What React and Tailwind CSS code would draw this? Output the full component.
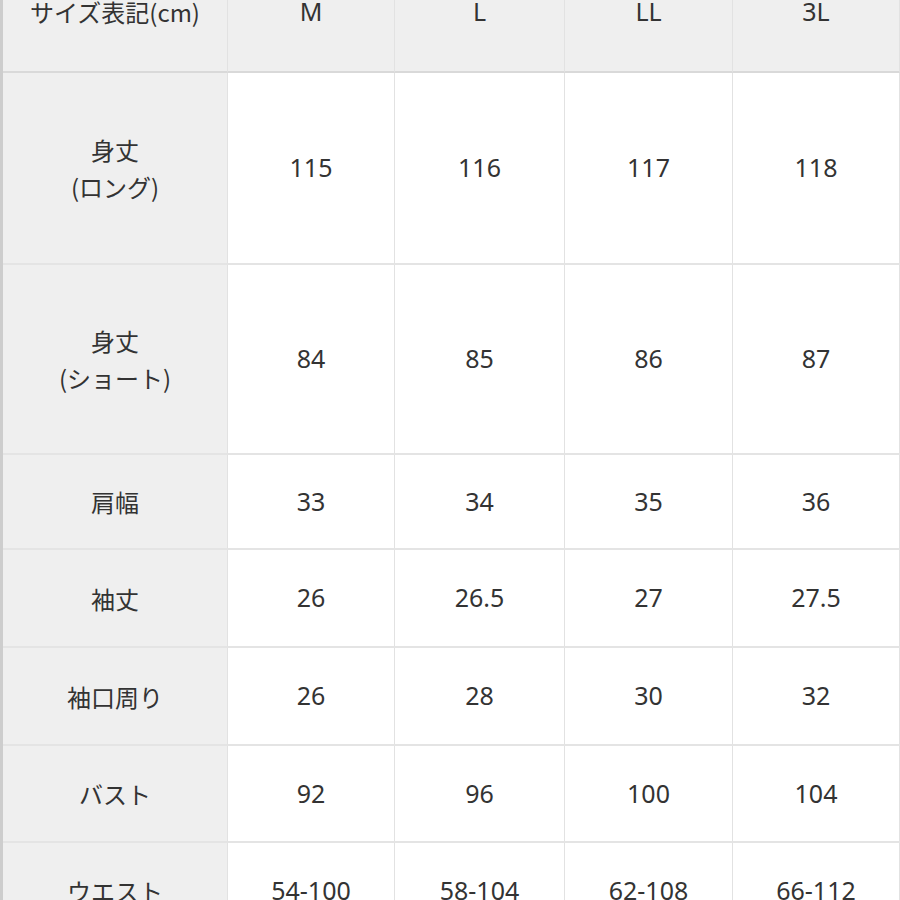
import React from "react";

const sizes = ["M", "L", "LL", "3L"];
const rows = [
  { label: ["身丈", "(ロング)"], values: ["115", "116", "117", "118"] },
  { label: ["身丈", "(ショート)"], values: ["84", "85", "86", "87"] },
  { label: ["肩幅"], values: ["33", "34", "35", "36"] },
  { label: ["袖丈"], values: ["26", "26.5", "27", "27.5"] },
  { label: ["袖口周り"], values: ["26", "28", "30", "32"] },
  { label: ["バスト"], values: ["92", "96", "100", "104"] },
  { label: ["ウエスト"], values: ["54-100", "58-104", "62-108", "66-112"] },
];

export default function App() {
  return (
    <div
      className="w-[900px] h-[900px] overflow-hidden bg-white border-l-[3px] border-[#cdcdcd] text-[#333] text-[24px]"
      style={{ fontFamily: '"Noto Sans CJK JP", "Noto Sans", sans-serif' }}
    >
      <div className="-mt-[47px] grid grid-cols-[225px_167px_170px_168px_167px] grid-rows-[120px_192px_190px_95px_98px_98px_97px_97px]">
        <div className="flex items-center justify-center bg-[#efefef] border-r border-b-2 border-r-[#e2e2e2] border-b-[#d9d9d9]">
          サイズ表記(cm)
        </div>
        {sizes.map((s) => (
          <div
            key={s}
            className="flex items-center justify-center bg-[#efefef] border-r border-b-2 border-r-[#e2e2e2] border-b-[#d9d9d9] font-['Noto_Sans',sans-serif] text-[25px]"
          >
            {s}
          </div>
        ))}
        {rows.map((r, i) => (
          <React.Fragment key={i}>
            <div className="flex flex-col items-center justify-center bg-[#efefef] border-r border-b-2 border-r-[#e2e2e2] border-b-[#e4e4e4] leading-[37px]">
              {r.label.map((l, j) => (
                <span key={j}>{l}</span>
              ))}
            </div>
            {r.values.map((v, j) => (
              <div
                key={j}
                className="flex items-center justify-center bg-white border-r border-b-2 border-r-[#e2e2e2] border-b-[#e4e4e4] font-['Noto_Sans',sans-serif] text-[25px]"
              >
                {v}
              </div>
            ))}
          </React.Fragment>
        ))}
      </div>
    </div>
  );
}
